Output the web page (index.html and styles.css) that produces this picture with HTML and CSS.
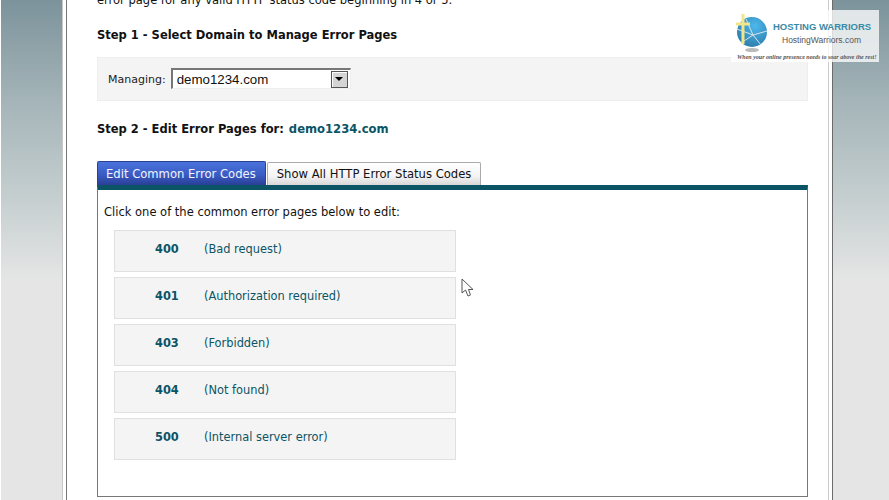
FILE: index.html
```html
<!DOCTYPE html>
<html lang="en">
<head>
<meta charset="utf-8">
<title>Error Pages</title>
<link rel="stylesheet" href="styles.css">
</head>
<body>
<div class="stage">
  <aside class="side side-left"></aside>
  <main class="page">
    <p class="intro">error page for any valid HTTP status code beginning in 4 or 5.</p>
    <h2 class="step step-one">Step 1 - Select Domain to Manage Error Pages</h2>
    <div class="domain-box">
      <span class="managing">Managing:</span>
      <div class="select">
        <span class="select-value">demo1234.com</span>
        <span class="select-btn"><span class="arrow"></span></span>
      </div>
    </div>
    <h2 class="step step-two">Step 2 - Edit Error Pages for: <span class="domain">demo1234.com</span></h2>
    <div class="tabs">
      <div class="tab tab-active">Edit Common Error Codes</div>
      <div class="tab">Show All HTTP Error Status Codes</div>
    </div>
    <section class="panel">
      <p class="panel-intro">Click one of the common error pages below to edit:</p>
      <div class="row"><span class="code">400</span><span class="desc">(Bad request)</span></div>
      <div class="row"><span class="code">401</span><span class="desc">(Authorization required)</span></div>
      <div class="row"><span class="code">403</span><span class="desc">(Forbidden)</span></div>
      <div class="row"><span class="code">404</span><span class="desc">(Not found)</span></div>
      <div class="row"><span class="code">500</span><span class="desc">(Internal server error)</span></div>
    </section>
  </main>
  <aside class="side side-right"></aside>

  <div class="logo">
    <svg class="globe" width="36" height="42" viewBox="0 0 36 42">
      <defs>
        <radialGradient id="g" cx="0.6" cy="0.3" r="0.8">
          <stop offset="0" stop-color="#4db8ec"/>
          <stop offset="1" stop-color="#2a78a6"/>
        </radialGradient>
      </defs>
      <ellipse cx="18" cy="37" rx="7" ry="2" fill="#bbb"/>
      <circle cx="18" cy="19" r="15" fill="url(#g)"/>
      <path d="M3 16 L19 22 L33 18 M7 30 L19 22 L27 32 M12 6 L19 22" fill="none" stroke="#d8e4ea" stroke-width="1"/>
      <path d="M9 1 V31 M2 11 H16" fill="none" stroke="#f2e68c" stroke-width="3"/>
    </svg>
    <div class="logo-name">HOSTING WARRIORS</div>
    <div class="logo-url">HostingWarriors.com</div>
    <div class="logo-tag">When your online presence needs to soar above the rest!</div>
  </div>

  <svg class="cursor" width="13" height="20" viewBox="0 0 13 20">
    <path d="M1 1 V15 L4.5 12 L7 18 L9.5 17 L7.5 11.5 L12 11.5 Z" fill="#fff" stroke="#555" stroke-width="1"/>
  </svg>
</div>
</body>
</html>
```
FILE: styles.css
```css
html, body {
  margin: 0;
  padding: 0;
  height: 500px;
  overflow: hidden;
  background: #fff;
}
.stage {
  position: relative;
  display: flex;
  width: 889px;
  height: 500px;
  overflow: hidden;
  padding-left: 1px;
  box-sizing: border-box;
  font-family: "DejaVu Sans", Verdana, sans-serif;
  color: #111;
}
.side {
  flex: 0 0 auto;
  height: 500px;
  background: linear-gradient(to bottom, #7c939b 0, #a4b4b8 100px, #c6cfd0 200px, #e5e5e5 280px, #e5e5e5 100%);
}
.side-left {
  width: 61px;
  border-right: 1px solid #c8c8c8;
}
.side-right {
  flex: 1 1 auto;
}
.page {
  flex: 0 0 auto;
  box-sizing: border-box;
  width: 767px;
  height: 500px;
  margin-left: 3px;
  padding: 0 24px 0 30px;
  background: #fff;
  border-left: 1px solid #777;
  border-right: 1px solid #6b6b6b;
  box-shadow: inset -3px 0 0 #fff, inset -4px 0 0 #ccc;
}
.intro {
  margin: -7px 0 0;
  height: 14px;
  font-size: 11.5px;
  line-height: 14px;
  white-space: nowrap;
}
.step {
  margin: 0;
  font-size: 11.5px;
  line-height: 14px;
  font-weight: bold;
  white-space: nowrap;
}
.step-one { margin-top: 21px; }
.step-two { margin-top: 21px; }
.domain {
  margin-left: 1px;
  font-size: 11.6px;
  color: #0b5466;
}
.domain-box {
  display: flex;
  align-items: center;
  height: 44px;
  box-sizing: border-box;
  margin-top: 15px;
  padding: 0 0 1px 10px;
  background: #f4f4f4;
  border: 1px solid #eee;
  width: 711px;
}
.managing {
  font-size: 11px;
  color: #222;
  margin-right: 5px;
  position: relative;
  top: 1px;
}
.select {
  display: flex;
  align-items: center;
  justify-content: space-between;
  box-sizing: border-box;
  width: 180px;
  height: 21px;
  padding: 0 2px 0 4px;
  background: #fff;
  border-top: 2px solid #777;
  border-left: 2px solid #777;
  border-right: 1px solid #eee;
  border-bottom: 1px solid #eee;
}
.select-value {
  font-family: "Liberation Sans", Arial, sans-serif;
  font-size: 13.3px;
  color: #111;
}
.select-btn {
  display: flex;
  align-items: center;
  justify-content: center;
  box-sizing: border-box;
  width: 17px;
  height: 17px;
  background: #d4d4d4;
  border: 1px solid #555;
  box-shadow: inset 1px 1px 0 #fff;
}
.arrow {
  width: 0;
  height: 0;
  border-left: 4px solid transparent;
  border-right: 4px solid transparent;
  border-top: 4px solid #000;
}
.tabs {
  display: flex;
  gap: 1px;
  margin-top: 25px;
}
.tab {
  box-sizing: border-box;
  height: 23px;
  margin-top: 1px;
  padding: 0 9px 0 9px;
  font-size: 11.6px;
  line-height: 23px;
  color: #111;
  white-space: nowrap;
  background: linear-gradient(to bottom, #fff, #f4f4f4 60%, #d8d8d8);
  border: 1px solid #aaa;
  border-bottom: 0;
  border-radius: 2px 2px 0 0;
}
.tab-active {
  height: 24px;
  margin-top: 0;
  padding: 0 9px 0 8px;
  line-height: 24px;
  color: #f2f4ff;
  background: linear-gradient(to bottom, #4a72dc, #3a5cc4 55%, #2a3f96);
  border: 1px solid #2b4196;
  border-bottom: 0;
}
.panel {
  box-sizing: border-box;
  width: 711px;
  height: 312px;
  padding: 0 0 0 16px;
  background: #fff;
  border: 1px solid #777;
  border-top: 5px solid #0b5466;
}
.panel-intro {
  margin: 15px 0 11px -10px;
  font-size: 11.5px;
  line-height: 14px;
  color: #111;
  white-space: nowrap;
}
.row {
  display: flex;
  box-sizing: border-box;
  width: 342px;
  height: 42px;
  margin-bottom: 5px;
  padding: 11px 0 0 40px;
  background: #f4f4f4;
  border: 1px solid #e0e0e0;
  font-size: 11.4px;
  line-height: 15px;
  color: #0b5466;
}
.code {
  width: 49px;
  font-weight: bold;
}
.logo {
  position: absolute;
  left: 731px;
  top: 10px;
  width: 148px;
  height: 52px;
  background: rgba(255, 255, 255, 0.76);
}
.globe {
  position: absolute;
  left: 3px;
  top: 3px;
}
.logo-name {
  position: absolute;
  left: 42px;
  top: 11px;
  font-family: "Liberation Sans", Arial, sans-serif;
  font-size: 9.5px;
  line-height: 12px;
  font-weight: bold;
  color: #3a8aa6;
  white-space: nowrap;
}
.logo-url {
  position: absolute;
  left: 51px;
  top: 25px;
  font-family: "Liberation Sans", Arial, sans-serif;
  font-size: 8.5px;
  line-height: 11px;
  color: #555;
  white-space: nowrap;
}
.logo-tag {
  position: absolute;
  left: 6px;
  top: 43px;
  font-family: "Liberation Serif", serif;
  font-size: 6px;
  line-height: 8px;
  font-style: italic;
  font-weight: bold;
  color: #555;
  white-space: nowrap;
}
.cursor {
  position: absolute;
  left: 461px;
  top: 278px;
}
```
